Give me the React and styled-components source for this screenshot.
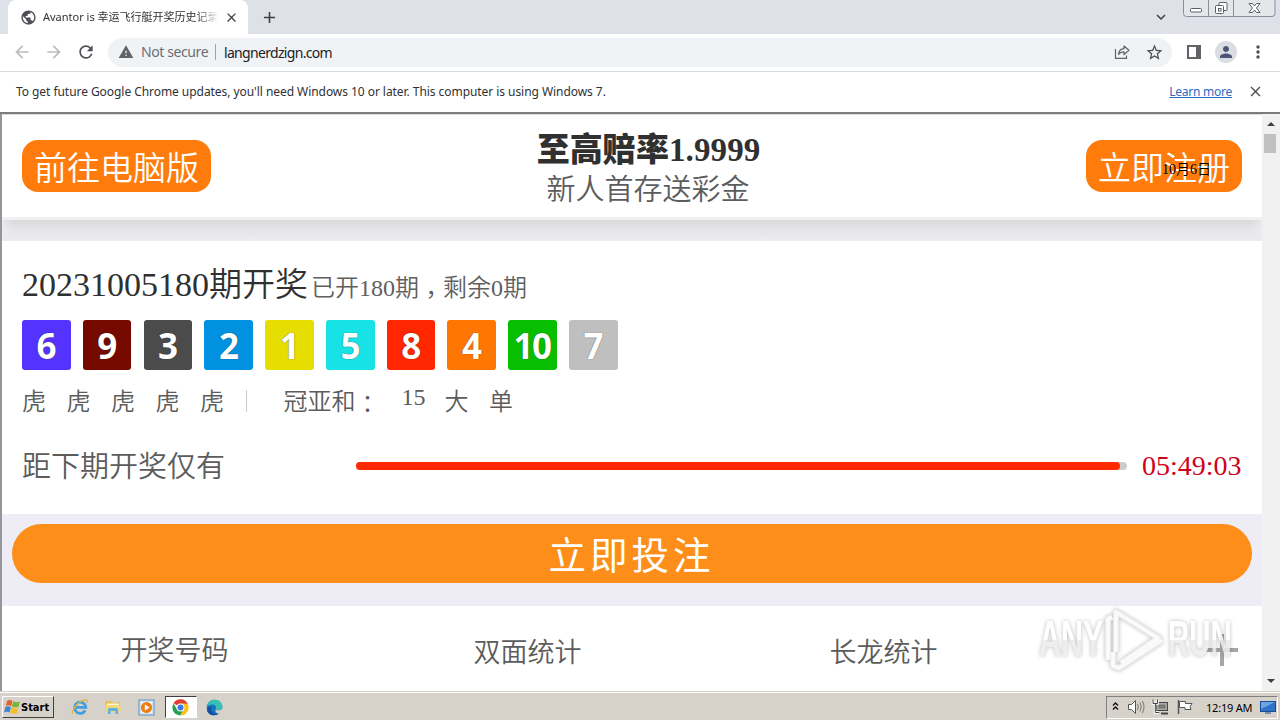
import styled, { createGlobalStyle } from "styled-components";
import {
  MdAdd,
  MdArrowBack,
  MdArrowForward,
  MdClose,
  MdExpandMore,
  MdMoreVert,
  MdPerson,
  MdPublic,
  MdRefresh,
  MdStarBorder,
  MdWarning,
} from "react-icons/md";

const balls = [
  { n: 6, color: "#5433ff" },
  { n: 9, color: "#770a00" },
  { n: 3, color: "#4b4b4b" },
  { n: 2, color: "#0092e0" },
  { n: 1, color: "#e6de00" },
  { n: 5, color: "#17e2e5" },
  { n: 8, color: "#ff2600" },
  { n: 4, color: "#ff7600" },
  { n: 10, color: "#07bf00" },
  { n: 7, color: "#bfbfbf" },
];

const tigers = ["虎", "虎", "虎", "虎", "虎"];

function WindowButtons() {
  return (
    <svg width="94" height="18" viewBox="0 0 94 18" fill="none">
      <path d="M1.500 0V13.500Q1.500 16.500 4.500 16.500H90Q93 16.500 93 13.500V0" fill="#e4e6ea" stroke="#8b8e96" />
      <path d="M26.500 0V16M51.500 0V16" stroke="#8b8e96" />
      <rect x="8.500" y="8.500" width="11" height="3.500" rx="1" fill="#fff" stroke="#5a5e6a" />
      <rect x="37" y="2.500" width="8" height="8" rx="1" fill="#fff" stroke="#5a5e6a" />
      <rect x="33.500" y="5.500" width="8" height="8" rx="1" fill="#fff" stroke="#5a5e6a" />
      <rect x="36.500" y="8.500" width="2.500" height="2.500" stroke="#5a5e6a" />
      <path
        d="M67 3.500h3.500l2 2.500 2-2.500H78L74.500 8l3.500 4.500h-3.500l-2-2.500-2 2.500H67L70.500 8z"
        fill="#fff"
        stroke="#5a5e6a"
      />
    </svg>
  );
}

function ShareIcon() {
  return (
    <svg width="16" height="16" viewBox="0 0 16 16" fill="none" stroke="#5f6368" strokeWidth="1.200">
      <path d="M1.500 5v9.400h11V11.500" />
      <path d="M4.500 10.500C4.800 6.500 7 4.800 10 4.700V2l5 4.300-5 4.200V7.900c-2.500 0-4.200.700-5.500 2.600z" strokeLinejoin="round" />
    </svg>
  );
}

function PanelIcon() {
  return (
    <svg width="14" height="14" viewBox="0 0 14 14">
      <path d="M1 1h12v12H1z" fill="none" stroke="#5f6368" strokeWidth="2" />
      <path d="M9 1h4v12H9z" fill="#5f6368" />
    </svg>
  );
}

function StartFlag() {
  return (
    <svg width="17" height="16" viewBox="0 0 16 15">
      <path d="M3 1.500Q5.500 0 8 1.800L6.700 6.800Q4.200 5.200 1.600 6.600z" fill="#e8602c" />
      <path d="M8.700 2Q11.500 3.700 15 2.400L13.700 7.300Q10.500 8.500 7.400 7z" fill="#7db43a" />
      <path d="M1.400 7.500Q4 6.200 6.500 7.700L5.200 12.700Q2.800 11.200 0 12.600z" fill="#3e86cf" />
      <path d="M7.200 8Q10 9.400 13.500 8.300L12.200 13.300Q9 14.400 5.900 12.900z" fill="#f6bf26" />
    </svg>
  );
}

function ExplorerLogo() {
  return (
    <svg width="18" height="18" viewBox="0 0 18 18" fill="none">
      <path d="M14.200 12.300A5.600 5.600 0 1 1 14.800 9.300H5" stroke="#3f9fe0" strokeWidth="2.800" />
      <path d="M2 15.800C-.5 14 4 7.500 9 4s8.500-3 7.200.600" stroke="#e2b53a" strokeWidth="1.300" />
    </svg>
  );
}

function FolderLogo() {
  return (
    <svg width="18" height="18" viewBox="0 0 18 18">
      <path d="M1.500 3h5l1.500 1.500h8V14H1.500z" fill="#e3c255" />
      <path d="M3 5.500h12V9H3z" fill="#fff7cf" />
      <path d="M1.500 7h15v7h-15z" fill="#f0d67c" />
      <path d="M4 16v-4.500q0-1.500 1.500-1.500h7q1.500 0 1.500 1.500V16h-2.500v-3h-5v3z" fill="#5fb0dc" />
    </svg>
  );
}

function PlayerLogo() {
  return (
    <svg width="17" height="17" viewBox="0 0 17 17">
      <rect x="1" y="1" width="15" height="15" fill="#cfe3f5" stroke="#5f93c4" />
      <rect x="3" y="3" width="11" height="11" fill="#f3f8fd" />
      <circle cx="8.500" cy="8.500" r="5.600" fill="#ee7d12" />
      <path d="M6.800 5.400v6.200l5-3.100z" fill="#fff" />
    </svg>
  );
}

function ChromeLogo() {
  return (
    <svg width="17" height="17" viewBox="0 0 18 18">
      <path d="M9 9 1.600 4.600A8.500 8.500 0 0 1 16.700 5.200L9 5z" fill="#e03f32" />
      <path d="M9 5h7.600A8.500 8.500 0 0 1 8.700 17.500L12.500 11z" fill="#fbc116" />
      <path d="M1.600 4.700A8.500 8.500 0 0 0 8.700 17.500L12.300 11 5.500 11z" fill="#2b9f4b" />
      <circle cx="9" cy="9" r="4.200" fill="#fff" />
      <circle cx="9" cy="9" r="3.200" fill="#3c79e6" />
    </svg>
  );
}

function EdgeLogo() {
  return (
    <svg width="17" height="17" viewBox="0 0 18 18">
      <circle cx="9" cy="9" r="8.300" fill="#1673c4" />
      <path d="M.8 8.500C1.500 3.500 5 .700 9.200.700c5 0 8.100 3.600 8.100 7 0 3-2.300 4.300-4.600 4.300-2 0-2.800-.800-2.300-1.600C11.500 8 9.500 5.700 6.500 5.700 3.500 5.700 1.400 7.200.8 8.500z" fill="#35c2b4" />
      <path d="M10.400 10.400c-.5.800.3 1.600 2.300 1.600 1.800 0 3.400-.600 4.600-2 1-.500.900 4.500-2.500 6-3.200-.500-5.800-2.300-4.400-5.600z" fill="#d5d0c8" />
      <path d="M6 8.500c-1.500 3.500 1 7 6.500 7.200-5 3.500-10.500 1-11.500-4C2 8.500 4 7.500 6 8.500z" fill="#174f9f" />
    </svg>
  );
}

function TrayIcons() {
  return (
    <svg width="84" height="18" viewBox="0 0 84 18" fill="none">
      <path d="M2 7.500 4.500 5 7 7.500M2 11.500 4.500 9 7 11.500" stroke="#111" strokeWidth="1.300" />
      <path d="M17.500 6.500h3l4-4v13l-4-4h-3z" fill="#fff" stroke="#555" />
      <path d="M26.500 6q1.500 3 0 6M29 4.500q2.500 4.500 0 9M31.300 3q3.500 6 0 12" stroke="#777" />
      <rect x="45.500" y="4.500" width="11" height="8" fill="#aaa" stroke="#444" />
      <rect x="47.500" y="6.500" width="7" height="4" fill="#777" />
      <path d="M50 15.500h7" stroke="#444" strokeWidth="2" />
      <path d="M42 2v3.500h4.500V2M44 5.500v9h4" stroke="#fff" strokeWidth="2.500" />
      <path d="M42 1.500v4h4.500v-4M44.300 5.500v9h4" stroke="#444" />
      <path d="M67.500 2v14" stroke="#555" strokeWidth="1.500" />
      <path d="M68.500 3.500h6v2h6.500l-2 3 1 3h-6v-2h-5.500z" fill="#fff" stroke="#555" />
    </svg>
  );
}

function Watermark() {
  return (
    <Mark width="204" height="68" viewBox="0 0 204 68">
      <defs>
        <linearGradient id="fade" x1="0" y1="0" x2="0" y2="1">
          <stop offset="0.520" stopColor="#fff" />
          <stop offset="0.520" stopColor="#ececec" />
        </linearGradient>
      </defs>
      <g fill="url(#fade)">
        <text transform="translate(5 50) scale(0.610 1)">ANY</text>
        <text transform="translate(134 50) scale(0.590 1)">RUN</text>
      </g>
      <g fill="none" strokeLinejoin="round">
        <path d="M74 54V13l4-2M82 46V6L124 32 87 57M79 46v14l6 2 43-28" stroke="#e6e6e6" strokeWidth="6" />
        <path d="M74 54V13l4-2M82 46V6L124 32 87 57M79 46v14l6 2 43-28" stroke="#fafafa" strokeWidth="3.800" />
      </g>
    </Mark>
  );
}

export default function App() {
  return (
    <Screen>
      <GlobalStyle />
      <TabStrip>
        <Tab>
          <MdPublic size={17} color="#4d5156" />
          <TabTitle>Avantor is 幸运飞行艇开奖历史记录</TabTitle>
          <MdClose size={15} color="#3c4043" />
        </Tab>
        <NewTab>
          <MdAdd size={19} color="#3c4043" />
        </NewTab>
        <Chevron>
          <MdExpandMore size={18} color="#3c4043" />
        </Chevron>
        <WindowButtons />
      </TabStrip>

      <Toolbar>
        <NavIcons>
          <MdArrowBack size={20} color="#b9bcc0" />
          <MdArrowForward size={20} color="#b9bcc0" />
          <MdRefresh size={20} color="#4d5156" />
        </NavIcons>
        <Omnibox>
          <MdWarning size={16} color="#5f6368" />
          <Security>Not secure</Security>
          <Address>langnerdzign.com</Address>
          <ShareIcon />
          <MdStarBorder size={19} color="#4d5156" />
        </Omnibox>
        <ToolIcons>
          <PanelIcon />
          <Avatar>
            <MdPerson size={18} color="#4a5577" />
          </Avatar>
          <MdMoreVert size={20} color="#4d5156" />
        </ToolIcons>
      </Toolbar>

      <InfoBar>
        <InfoText>
          To get future Google Chrome updates, you'll need Windows 10 or later. This computer is using Windows 7.
        </InfoText>
        <LearnMore>Learn more</LearnMore>
        <MdClose size={17} color="#4d5156" />
      </InfoBar>

      <Viewport>
        <Page>
          <Header>
            <Pill>前往电脑版</Pill>
            <Slogan>
              <SloganTitle>至高赔率1.9999</SloganTitle>
              <SloganText>新人首存送彩金</SloganText>
            </Slogan>
            <Pill>
              立即注册
              <DateLabel>10月6日</DateLabel>
            </Pill>
          </Header>
          <HeaderShadow />

          <Draw>
            <Issue>
              <IssueNumber>20231005180</IssueNumber>期开奖
              <IssueCount>
                已开180期<Punct $drop={7}>，</Punct>剩余0期
              </IssueCount>
            </Issue>
            <Balls>
              {balls.map((b) => (
                <Ball key={b.n} $color={b.color}>
                  {b.n}
                </Ball>
              ))}
            </Balls>
            <Results>
              {tigers.map((t, i) => (
                <Tiger key={i}>{t}</Tiger>
              ))}
              <Divider />
              <SumLabel>
                冠亚和<Punct $drop={3}>：</Punct>
              </SumLabel>
              <SumValue>15</SumValue>
              <Tiger>大</Tiger>
              <Tiger>单</Tiger>
            </Results>
            <Countdown>
              <CountLabel>距下期开奖仅有</CountLabel>
              <Track>
                <Fill />
              </Track>
              <Clock>05:49:03</Clock>
            </Countdown>
          </Draw>

          <BetArea>
            <BetButton>立即投注</BetButton>
          </BetArea>

          <Menu>
            <MenuItem $up>开奖号码</MenuItem>
            <MenuItem>双面统计</MenuItem>
            <MenuItem>长龙统计</MenuItem>
            <Plus width="32" height="32" viewBox="0 0 32 32">
              <path d="M16 0v32M0 16h32" stroke="#a6a6a6" strokeWidth="4" />
            </Plus>
          </Menu>
          <Watermark />
        </Page>
        <Scrollbar>
          <Arrow $up />
          <Thumb />
          <Arrow />
        </Scrollbar>
      </Viewport>

      <Taskbar>
        <StartButton>
          <StartFlag />
          Start
        </StartButton>
        <Launch>
          <ExplorerLogo />
        </Launch>
        <Launch>
          <FolderLogo />
        </Launch>
        <Launch>
          <PlayerLogo />
        </Launch>
        <Launch $active>
          <ChromeLogo />
        </Launch>
        <Launch>
          <EdgeLogo />
        </Launch>
        <Tray>
          <TrayIcons />
          <Time>12:19 AM</Time>
          <svg width="16" height="14" viewBox="0 0 16 14">
            <rect x="0.500" y="1.500" width="15" height="10" fill="#2f73c9" stroke="#1c4c94" />
            <path d="M1 2h14L1 9z" fill="#6ba6e4" />
            <path d="M5 13h6" stroke="#1c4c94" />
          </svg>
        </Tray>
      </Taskbar>
    </Screen>
  );
}

const GlobalStyle = createGlobalStyle`
  * {
    box-sizing: border-box;
  }

  body {
    margin: 0;
    overflow: hidden;
  }

  svg {
    flex: none;
    display: block;
  }
`;

const Screen = styled.div`
  width: 1280px;
  height: 720px;
  display: flex;
  flex-direction: column;
  overflow: hidden;
  white-space: nowrap;
  background: #fff;
  font-family: "Noto Sans", "Noto Sans CJK SC", sans-serif;
`;

const TabStrip = styled.div`
  height: 34px;
  flex: none;
  display: flex;
  align-items: flex-start;
  padding: 0 4px 0 8px;
  background: #dee1e7;
`;

const Tab = styled.div`
  width: 240px;
  height: 34px;
  display: flex;
  align-items: center;
  padding: 0 9px 0 12px;
  border-radius: 8px 8px 0 0;
  background: #fff;
`;

const TabTitle = styled.span`
  width: 175px;
  margin: 0 6px;
  overflow: hidden;
  font-size: 11px;
  line-height: 18px;
  color: #303134;
  mask-image: linear-gradient(to right, #000 88%, transparent);
`;

const NewTab = styled.div`
  height: 34px;
  display: flex;
  align-items: center;
  margin-left: 12px;
`;

const Chevron = styled.div`
  height: 34px;
  display: flex;
  align-items: center;
  margin-left: auto;
  margin-right: 12px;
`;

const Toolbar = styled.div`
  height: 38px;
  flex: none;
  display: flex;
  align-items: center;
  padding: 0 12px 1px;
  border-bottom: 1px solid #dadce0;
`;

const NavIcons = styled.div`
  display: flex;
  gap: 12px;
  width: 96px;
`;

const Omnibox = styled.div`
  width: 1064px;
  height: 29px;
  display: flex;
  align-items: center;
  padding: 0 8px 0 10px;
  border-radius: 15px;
  background: #f0f3f6;
  color: #202124;
  font-size: 14px;

  svg:last-child {
    margin-left: 15px;
  }
`;

const Security = styled.span`
  width: 75px;
  margin-left: 7px;
  line-height: 16px;
  border-right: 1px solid #9fa3a8;
  letter-spacing: -0.4px;
  color: #6b6f74;
`;

const Address = styled.span`
  flex: 1;
  margin-left: 8px;
  letter-spacing: -0.68px;
`;

const ToolIcons = styled.div`
  flex: 1;
  display: flex;
  align-items: center;
  justify-content: space-between;
  padding: 0 0 0 15px;
`;

const Avatar = styled.div`
  width: 22px;
  height: 22px;
  display: flex;
  align-items: center;
  justify-content: center;
  margin-left: 2px;
  border-radius: 50%;
  background: #dadde4;
`;

const InfoBar = styled.div`
  height: 42px;
  flex: none;
  display: flex;
  align-items: center;
  padding: 0 16px 2px 16px;
  border-bottom: 2px solid #7b7d7b;
  font-size: 12px;
`;

const InfoText = styled.span`
  flex: 1;
  letter-spacing: -0.055px;
  color: #303134;
`;

const LearnMore = styled.span`
  margin-right: 15px;
  letter-spacing: -0.25px;
  color: #2a6bbf;
  text-decoration: underline;
`;

const Viewport = styled.div`
  height: 577px;
  flex: none;
  display: flex;
  border-left: 2px solid #96969a;
`;

const Page = styled.div`
  position: relative;
  width: 1260px;
  height: 577px;
  background: #eeedf5;
  overflow: hidden;
  font-family: "Liberation Serif", "Noto Sans CJK SC", serif;
  font-weight: 350;
`;

const Header = styled.div`
  height: 106px;
  display: flex;
  align-items: flex-start;
  justify-content: space-between;
  padding: 26px 20px 0;
  border-top: 1px solid #dcdcdc;
  border-bottom: 3px solid #f1f1f1;
  background: #fff;
`;

const Pill = styled.div`
  position: relative;
  height: 52px;
  margin-top: -1px;
  padding: 3px 12px 0;
  border-radius: 16px;
  background: #ff7c0c;
  color: #fff;
  font-size: 33px;
  line-height: 52px;
`;

const DateLabel = styled.span`
  position: absolute;
  left: 76px;
  top: 20px;
  font-size: 14px;
  line-height: 20px;
  color: #000;
`;

const Slogan = styled.div`
  display: flex;
  flex-direction: column;
  align-items: center;
  margin-top: -12px;
`;

const SloganTitle = styled.div`
  font-size: 33px;
  line-height: 42px;
  font-weight: 900;
  letter-spacing: 0.1px;
  color: #303030;
`;

const SloganText = styled.div`
  margin-right: 1px;
  font-size: 29px;
  line-height: 38px;
  color: #5c5c5c;
`;

const HeaderShadow = styled.div`
  height: 21px;
  background: linear-gradient(#d9d9dc, #e4e4e8 40%, #ececf1);
  box-shadow: inset 12px 0 10px -8px #ececf1, inset -12px 0 10px -8px #ececf1;
`;

const Draw = styled.div`
  height: 273px;
  padding: 22px 20px 0;
  background: #fff;
  color: #5c5c5c;
`;

const Issue = styled.div`
  height: 57px;
  font-size: 33px;
  line-height: 44px;
  color: #303030;
`;

const IssueNumber = styled.span`
  font-size: 34px;
`;

const IssueCount = styled.span`
  margin-left: 3px;
  font-size: 24px;
  color: #606060;
`;

const Punct = styled.span`
  font-family: "Noto Sans CJK TC", sans-serif;
  line-height: 1px;
  vertical-align: -${(p) => p.$drop}px;
`;

const Balls = styled.div`
  display: flex;
  gap: 12.2px;
`;

const Ball = styled.div`
  width: 48.6px;
  height: 50px;
  padding-right: 1px;
  border-radius: 3px;
  background: ${(p) => p.$color};
  color: #fff;
  font-family: "Open Sans", sans-serif;
  font-size: 35px;
  font-weight: 700;
  line-height: 51px;
  text-align: center;
  letter-spacing: -1.5px;
  text-shadow: 0 0 1px rgba(0, 0, 0, 0.7);
`;

const Results = styled.div`
  height: 61px;
  display: flex;
  align-items: center;
  padding-top: 2px;
  font-size: 24px;
  line-height: 36px;
`;

const Tiger = styled.span`
  width: 44.5px;
`;

const Divider = styled.div`
  width: 1px;
  height: 22px;
  margin-left: 1px;
  margin-top: -2px;
  background: #ccc;
`;

const SumLabel = styled.span`
  width: 118px;
  margin-left: 37px;
`;

const SumValue = styled.span`
  width: 43px;
  margin-top: -9px;
`;

const Countdown = styled.div`
  height: 70px;
  display: flex;
  align-items: center;
`;

const CountLabel = styled.span`
  width: 334px;
  margin-top: -5px;
  font-size: 29px;
`;

const Track = styled.div`
  width: 771px;
  height: 8px;
  border-radius: 4px;
  background: #ccc;
`;

const Fill = styled.div`
  width: 764px;
  height: 8px;
  border-radius: 4px;
  background: #ff2900;
`;

const Clock = styled.span`
  margin-left: 15px;
  font-size: 28px;
  color: #d0021b;
`;

const BetArea = styled.div`
  height: 92px;
  padding: 10px;
`;

const BetButton = styled.div`
  height: 59px;
  padding-top: 3px;
  padding-right: 1px;
  border-radius: 30px;
  background: #fd8e1a;
  color: #fff;
  font-size: 37.5px;
  font-weight: 400;
  line-height: 59px;
  letter-spacing: 4px;
  text-align: center;
`;

const Menu = styled.div`
  height: 85px;
  display: grid;
  grid-template-columns: 345px 361px 351px 1fr;
  background: #fff;
`;

const MenuItem = styled.div`
  padding-top: ${(p) => (p.$up ? "25px" : "27px")};
  font-size: 27px;
  line-height: 40px;
  text-align: center;
  color: #5c5c5c;
`;

const Plus = styled.svg`
  margin: 28px 0 0 147px;
`;

const Mark = styled.svg`
  position: absolute;
  left: 1032px;
  top: 492px;
  font-family: "Liberation Sans", sans-serif;
  font-size: 50px;
  font-weight: 700;
  opacity: 0.85;
  filter: drop-shadow(0 0 2px rgba(0, 0, 0, 0.3));
`;

const Scrollbar = styled.div`
  width: 18px;
  display: flex;
  flex-direction: column;
  align-items: center;
  padding: 8px 0;
  background: #f1f1f1;
`;

const Arrow = styled.div`
  margin-left: -1px;
  border: 4px solid transparent;
  ${(p) =>
    p.$up
      ? "border-top: 0; border-bottom-color: #404040;"
      : "border-bottom: 0; border-top-color: #404040; margin-top: auto;"}
`;

const Thumb = styled.div`
  width: 12px;
  height: 19px;
  margin-top: 8px;
  margin-left: -2px;
  background: #c1c1c1;
`;

const Taskbar = styled.div`
  height: 29px;
  flex: none;
  display: flex;
  align-items: center;
  padding: 3px 2px 1px;
  border-top: 1px solid #d4d0c8;
  box-shadow: inset 0 1px #fff;
  background: #d6d1c9;
`;

const StartButton = styled.div`
  width: 52px;
  height: 22px;
  display: flex;
  align-items: center;
  padding-left: 1px;
  margin-right: 9px;
  border: 1px solid;
  border-color: #fff #404040 #404040 #fff;
  font-family: "DejaVu Sans Condensed", "DejaVu Sans", sans-serif;
  font-size: 11px;
  font-weight: 700;
  color: #000;
`;

const Launch = styled.div`
  width: 32px;
  height: 22px;
  margin: 0 0.8px;
  display: flex;
  align-items: center;
  justify-content: center;
  border: 1px solid;
  border-color: ${(p) => (p.$active ? "#404040 #fff #fff #404040" : "transparent")};
  background: ${(p) => (p.$active ? "#fff" : "transparent")};
`;

const Tray = styled.div`
  width: 172px;
  height: 23px;
  display: flex;
  align-items: center;
  margin-left: auto;
  padding-left: 4px;
  border: 1px solid;
  border-color: #808080 #fff #fff #808080;
`;

const Time = styled.span`
  width: 48px;
  margin: 0 6px 0 11px;
  font-size: 11px;
  letter-spacing: -0.2px;
  color: #000;
`;
